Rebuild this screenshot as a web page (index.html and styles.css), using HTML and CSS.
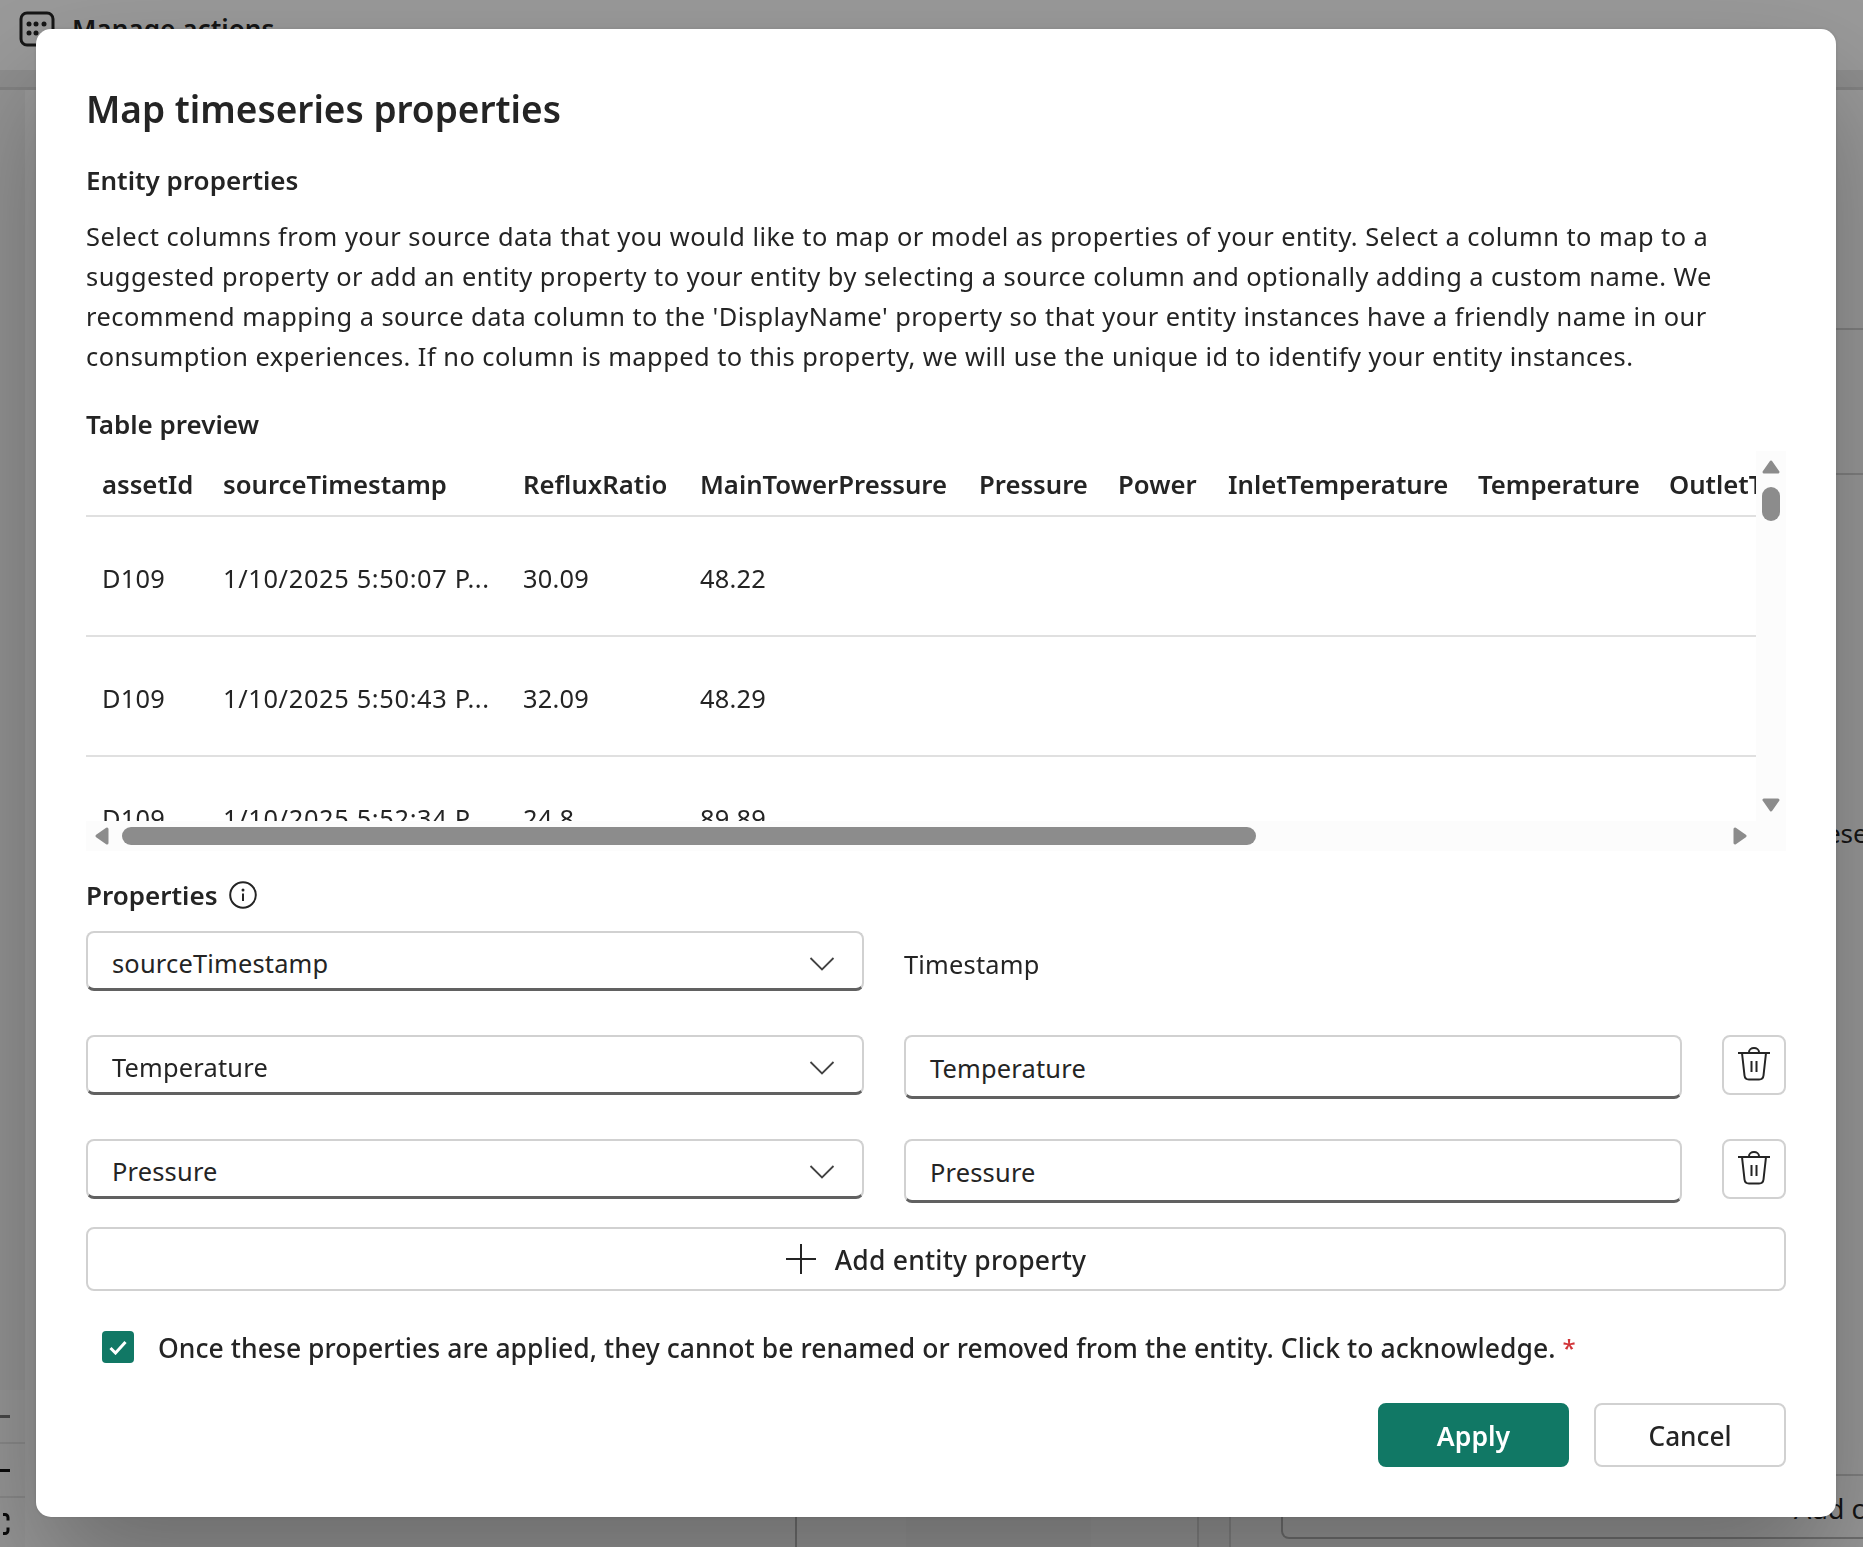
FILE: index.html
```html
<!DOCTYPE html>
<html lang="en">
<head>
    <meta charset="UTF-8">
    <title>Map timeseries properties</title>
    <link rel="stylesheet" href="styles.css">
</head>
<body>
    <div class="page">
        <div class="topbar">
            <svg class="topbar-icon" width="36" height="36" viewBox="0 0 36 36" fill="none">
                <rect x="2" y="2" width="32" height="32" rx="6" stroke="#242424" stroke-width="3"/>
                <circle cx="10" cy="13" r="2.5" fill="#242424"/>
                <circle cx="17" cy="13" r="2.5" fill="#242424"/>
                <circle cx="25" cy="13" r="2.5" fill="#242424"/>
                <circle cx="10" cy="22" r="2.5" fill="#242424"/>
                <circle cx="17" cy="22" r="2.5" fill="#242424"/>
            </svg>
            <span class="topbar-title">Manage actions</span>
        </div>
        <div class="subbar"></div>
        <div class="workspace">
            <div class="rail">
                <div class="rail-tile"><span class="rail-dash rail-dash-muted"></span></div>
                <div class="rail-tile"><span class="rail-dash"></span></div>
                <div class="rail-tile">
                    <svg width="10" height="22" viewBox="0 0 10 22" fill="none"><path d="M3 1.5 h2 a3 3 0 0 1 3 3 v3 M8 14.5 v3 a3 3 0 0 1 -3 3 h-2" stroke="#111" stroke-width="3"/></svg>
                </div>
            </div>
            <div class="pane pane-a"></div>
            <div class="pane pane-b"></div>
            <div class="pane pane-c"></div>
            <div class="pane pane-d"></div>
            <div class="pane pane-e"></div>
            <div class="side">
                <div class="side-block side-block-a"></div>
                <div class="side-block side-block-b"></div>
                <div class="side-block side-block-c"><span class="side-text">Prese</span></div>
                <div class="side-box">Add c</div>
            </div>
        </div>
    </div>
    <div class="scrim"></div>

    <div class="dialog">
        <h1 class="dialog-title">Map timeseries properties</h1>
        <h2 class="section-label entity-label">Entity properties</h2>
        <p class="intro">Select columns from your source data that you would like to map or model as properties of your entity. Select a column to map to a suggested property or add an entity property to your entity by selecting a source column and optionally adding a custom name. We recommend mapping a source data column to the 'DisplayName' property so that your entity instances have a friendly name in our consumption experiences. If no column is mapped to this property, we will use the unique id to identify your entity instances.</p>

        <h2 class="section-label preview-label">Table preview</h2>
        <div class="preview">
            <div class="table-view">
                <table class="data-table">
                    <thead>
                        <tr>
                            <th>assetId</th>
                            <th>sourceTimestamp</th>
                            <th>RefluxRatio</th>
                            <th>MainTowerPressure</th>
                            <th>Pressure</th>
                            <th>Power</th>
                            <th>InletTemperature</th>
                            <th>Temperature</th>
                            <th>OutletTemperature</th>
                        </tr>
                    </thead>
                    <tbody>
                        <tr><td>D109</td><td>1/10/2025 5:50:07 P...</td><td>30.09</td><td>48.22</td><td></td><td></td><td></td><td></td><td></td></tr>
                        <tr><td>D109</td><td>1/10/2025 5:50:43 P...</td><td>32.09</td><td>48.29</td><td></td><td></td><td></td><td></td><td></td></tr>
                        <tr><td>D109</td><td>1/10/2025 5:52:34 P...</td><td>24.8</td><td>89.89</td><td></td><td></td><td></td><td></td><td></td></tr>
                    </tbody>
                </table>
            </div>
            <div class="vbar">
                <svg width="18" height="14" viewBox="0 0 18 14"><path class="arrow" d="M9 2 L16 12 H2 Z"/></svg>
                <div class="vbar-thumb"></div>
                <svg class="vbar-down" width="18" height="14" viewBox="0 0 18 14"><path class="arrow" d="M2 2 H16 L9 12 Z"/></svg>
            </div>
            <div class="hbar">
                <svg width="14" height="18" viewBox="0 0 14 18"><path class="arrow" d="M12 2 V16 L2 9 Z"/></svg>
                <div class="hbar-thumb"></div>
                <svg width="14" height="18" viewBox="0 0 14 18"><path class="arrow" d="M2 2 L12 9 L2 16 Z"/></svg>
            </div>
        </div>

        <div class="properties-head">
            <h2 class="section-label">Properties</h2>
            <svg width="28" height="28" viewBox="0 0 28 28" fill="none">
                <circle cx="14" cy="14" r="12.8" stroke="#242424" stroke-width="2"/>
                <circle cx="14" cy="9" r="1.5" fill="#242424"/>
                <path d="M14 12.5 V20" stroke="#242424" stroke-width="2"/>
            </svg>
        </div>

        <div class="map-row">
            <div class="field select">
                <span>sourceTimestamp</span>
                <svg class="chevron" width="26" height="14" viewBox="0 0 26 14" fill="none"><path d="M1.5 1 L13 12.5 L24.5 1" stroke="#424242" stroke-width="1.8"/></svg>
            </div>
            <div class="static-name">Timestamp</div>
        </div>
        <div class="map-row">
            <div class="field select">
                <span>Temperature</span>
                <svg class="chevron" width="26" height="14" viewBox="0 0 26 14" fill="none"><path d="M1.5 1 L13 12.5 L24.5 1" stroke="#424242" stroke-width="1.8"/></svg>
            </div>
            <div class="field text-input">Temperature</div>
            <button class="icon-button">
                <svg width="32" height="34" viewBox="0 0 32 34" fill="none" stroke="#242424" stroke-width="2">
                    <path d="M0 6 H32"/>
                    <path d="M11 6 V5 a5 4 0 0 1 10 0 V6"/>
                    <path d="M4 6 L6.5 28.5 a4.5 4.5 0 0 0 4.5 4 h10 a4.5 4.5 0 0 0 4.5 -4 L28 6"/>
                    <path d="M13.5 14 V25 M18.5 14 V25"/>
                </svg>
            </button>
        </div>
        <div class="map-row">
            <div class="field select">
                <span>Pressure</span>
                <svg class="chevron" width="26" height="14" viewBox="0 0 26 14" fill="none"><path d="M1.5 1 L13 12.5 L24.5 1" stroke="#424242" stroke-width="1.8"/></svg>
            </div>
            <div class="field text-input">Pressure</div>
            <button class="icon-button">
                <svg width="32" height="34" viewBox="0 0 32 34" fill="none" stroke="#242424" stroke-width="2">
                    <path d="M0 6 H32"/>
                    <path d="M11 6 V5 a5 4 0 0 1 10 0 V6"/>
                    <path d="M4 6 L6.5 28.5 a4.5 4.5 0 0 0 4.5 4 h10 a4.5 4.5 0 0 0 4.5 -4 L28 6"/>
                    <path d="M13.5 14 V25 M18.5 14 V25"/>
                </svg>
            </button>
        </div>

        <button class="add-button">
            <svg width="30" height="30" viewBox="0 0 30 30" fill="none"><path d="M15 0 V30 M0 15 H30" stroke="#242424" stroke-width="2"/></svg>
            <span class="add-label">Add entity property</span>
        </button>

        <div class="acknowledge">
            <span class="checkbox">
                <svg width="18" height="15" viewBox="0 0 18 15" fill="none"><path d="M1.5 8 L6.5 13 L16.5 2" stroke="#fff" stroke-width="3"/></svg>
            </span>
            <span class="acknowledge-text">Once these properties are applied, they cannot be renamed or removed from the entity. Click to acknowledge.</span>
            <span class="required">*</span>
        </div>

        <div class="actions">
            <button class="btn btn-primary">Apply</button>
            <button class="btn">Cancel</button>
        </div>
    </div>
</body>
</html>
```

FILE: styles.css
```css
* {
    box-sizing: border-box;
}

html,
body {
    margin: 0;
    height: 100%;
    overflow: hidden;
}

body {
    font-family: "Noto Sans", "Open Sans", sans-serif;
    font-size: 25.4px;
    color: #242424;
    background: #fff;
}

/* page behind the dialog */
.page {
    height: 100vh;
    display: flex;
    flex-direction: column;
}

.topbar {
    height: 70px;
    display: flex;
    align-items: center;
    gap: 17px;
    padding-left: 19px;
    padding-bottom: 12px;
    flex: none;
}

.topbar-title {
    font-size: 26.2px;
    font-weight: 600;
}

.subbar {
    height: 20px;
    flex: none;
    background: #ececec;
    border-bottom: 3px solid #d8d8d8;
}

.workspace {
    flex: 1;
    display: flex;
    min-height: 0;
    overflow: hidden;
}

.rail {
    width: 25px;
    padding-top: 1300px;
    background: #f4f4f4;
    flex: none;
}

.rail-tile {
    height: 54px;
    border-bottom: 2px solid #e4e4e4;
    background: #fafafa;
    display: flex;
    align-items: center;
}

.rail-dash {
    width: 10px;
    height: 3px;
    background: #111;
}

.rail-dash-muted {
    background: #777;
}

.pane {
    flex: none;
}

.pane-a { width: 772px; border-right: 2px solid #bbb; background: #fff; }
.pane-b { width: 109px; background: #fff; }
.pane-c { width: 185px; background: #fbfbfb; }
.pane-d { width: 108px; border-right: 2px solid #ddd; background: #fff; }
.pane-e { width: 32px; border-right: 2px solid #ddd; background: #fafafa; }

.side {
    flex: 1;
    display: flex;
    flex-direction: column;
}

.side-block {
    margin-left: -100px;
    border-bottom: 2px solid #d6d6d6;
}

.side-block-a { height: 240px; }
.side-block-b { height: 145px; }

.side-block-c {
    height: 1001px;
    padding-left: 669px;
    padding-top: 340px;
}

.side-text {
    font-size: 26px;
}

.side-box {
    margin: 15px -20px 0 50px;
    height: 48px;
    border: 2px solid #bbb;
    border-top: none;
    border-radius: 0 0 8px 8px;
    padding: 0 0 0 511px;
    font-size: 27px;
    line-height: 36px;
    white-space: nowrap;
}

.scrim {
    position: fixed;
    inset: 0;
    background: rgba(0, 0, 0, 0.4);
}

/* dialog */
.dialog {
    position: fixed;
    left: 36px;
    top: 29px;
    width: 1800px;
    height: 1488px;
    padding: 55px 50px 0;
    background: #fff;
    border-radius: 15px;
    box-shadow: 0 0 4px rgba(0, 0, 0, 0.12), 0 60px 120px rgba(0, 0, 0, 0.3);
}

.dialog-title {
    margin: 0 0 30px;
    font-size: 37px;
    line-height: 50px;
    font-weight: 600;
}

.section-label {
    margin: 0;
    font-size: 26px;
    line-height: 32px;
    font-weight: 600;
}

.entity-label {
    margin-bottom: 20px;
}

.intro {
    margin: 0 0 32px;
    line-height: 40px;
    letter-spacing: 0.47px;
}

.preview-label {
    margin-bottom: 11px;
}

.preview {
    display: grid;
    grid-template-columns: 1670px 30px;
    grid-template-rows: 370px 30px;
}

.table-view {
    overflow: hidden;
}

.data-table {
    border-collapse: separate;
    border-spacing: 0;
    table-layout: fixed;
    width: 1847px;
}

.data-table th,
.data-table td {
    padding: 3px 0 0 16px;
    text-align: left;
    white-space: nowrap;
    border-bottom: 2px solid #e0e0e0;
    overflow: hidden;
}

.data-table th {
    height: 66px;
    font-size: 25.7px;
    font-weight: 600;
}

.data-table td {
    height: 120px;
    letter-spacing: 0.2px;
}

.data-table td:nth-child(2) {
    letter-spacing: 0.65px;
}

.data-table th:nth-child(1) { width: 121px; }
.data-table th:nth-child(2) { width: 300px; }
.data-table th:nth-child(3) { width: 177px; }
.data-table th:nth-child(4) { width: 279px; }
.data-table th:nth-child(5) { width: 139px; }
.data-table th:nth-child(6) { width: 110px; }
.data-table th:nth-child(7) { width: 250px; }
.data-table th:nth-child(8) { width: 191px; }
.data-table th:nth-child(9) { width: 280px; }

.arrow {
    fill: #8c8c8c;
    stroke: #8c8c8c;
    stroke-width: 3;
    stroke-linejoin: round;
}

.vbar {
    background: #fcfcfc;
    display: flex;
    flex-direction: column;
    align-items: center;
    padding: 9px 0;
}

.vbar-thumb {
    width: 18px;
    height: 34px;
    margin-top: 13px;
    border-radius: 9px;
    background: #8c8c8c;
}

.vbar-down {
    margin-top: auto;
}

.hbar {
    grid-column: 1 / -1;
    background: #fcfcfc;
    display: flex;
    align-items: center;
    padding: 0 39px 0 9px;
}

.hbar-thumb {
    width: 1134px;
    height: 18px;
    margin-left: 13px;
    margin-right: auto;
    border-radius: 9px;
    background: #8c8c8c;
}

.properties-head {
    display: flex;
    align-items: center;
    gap: 11px;
    margin: 28px 0 20px;
}

.map-row {
    display: grid;
    grid-template-columns: 778px 778px 64px;
    column-gap: 40px;
    align-items: start;
    height: 104px;
}

.map-row:nth-of-type(2) {
    height: 103px;
}

.field {
    display: flex;
    align-items: center;
    border: 2px solid #d1d1d1;
    border-bottom: 3px solid #616161;
    border-radius: 8px;
    background: #fff;
    padding: 3px 27px 0 24px;
    letter-spacing: 0.2px;
}

.select {
    height: 60px;
    padding-top: 5px;
    justify-content: space-between;
}

.chevron {
    margin-top: 1px;
}

.text-input {
    height: 64px;
}

.static-name {
    height: 60px;
    padding-top: 5px;
    display: flex;
    align-items: center;
    letter-spacing: 0.2px;
}

.icon-button {
    width: 64px;
    height: 60px;
    padding: 0 0 2px;
    display: flex;
    align-items: center;
    justify-content: center;
    background: #fff;
    border: 2px solid #d1d1d1;
    border-radius: 8px;
}

.add-button {
    width: 100%;
    height: 64px;
    margin-top: -16px;
    display: flex;
    align-items: center;
    justify-content: center;
    gap: 19px;
    background: #fff;
    border: 2px solid #d1d1d1;
    border-radius: 8px;
    font: inherit;
    font-size: 26.5px;
    font-weight: 500;
    letter-spacing: 0.2px;
    color: #242424;
}

.add-label {
    padding-top: 2px;
}

.acknowledge {
    display: flex;
    align-items: center;
    height: 32px;
    margin: 40px 0 0 16px;
    font-size: 26.5px;
}

.checkbox {
    width: 32px;
    height: 32px;
    flex: none;
    display: flex;
    align-items: center;
    justify-content: center;
    border-radius: 4px;
    background: #117865;
}

.acknowledge-text {
    margin-left: 24px;
    padding-top: 2px;
    font-weight: 500;
    letter-spacing: 0.06px;
    white-space: nowrap;
}

.required {
    margin-left: 7px;
    color: #d13438;
    font-size: 24px;
    font-weight: 500;
}

.actions {
    display: flex;
    justify-content: flex-end;
    gap: 25px;
    margin-top: 40px;
}

.btn {
    width: 192px;
    height: 64px;
    padding: 2px 0 0;
    background: #fff;
    border: 2px solid #d1d1d1;
    border-radius: 8px;
    font: inherit;
    font-size: 26.2px;
    font-weight: 500;
    color: #242424;
}

.btn-primary {
    width: 191px;
    background: #117865;
    border-color: #117865;
    color: #fff;
    font-size: 26.6px;
    font-weight: 600;
}
```
